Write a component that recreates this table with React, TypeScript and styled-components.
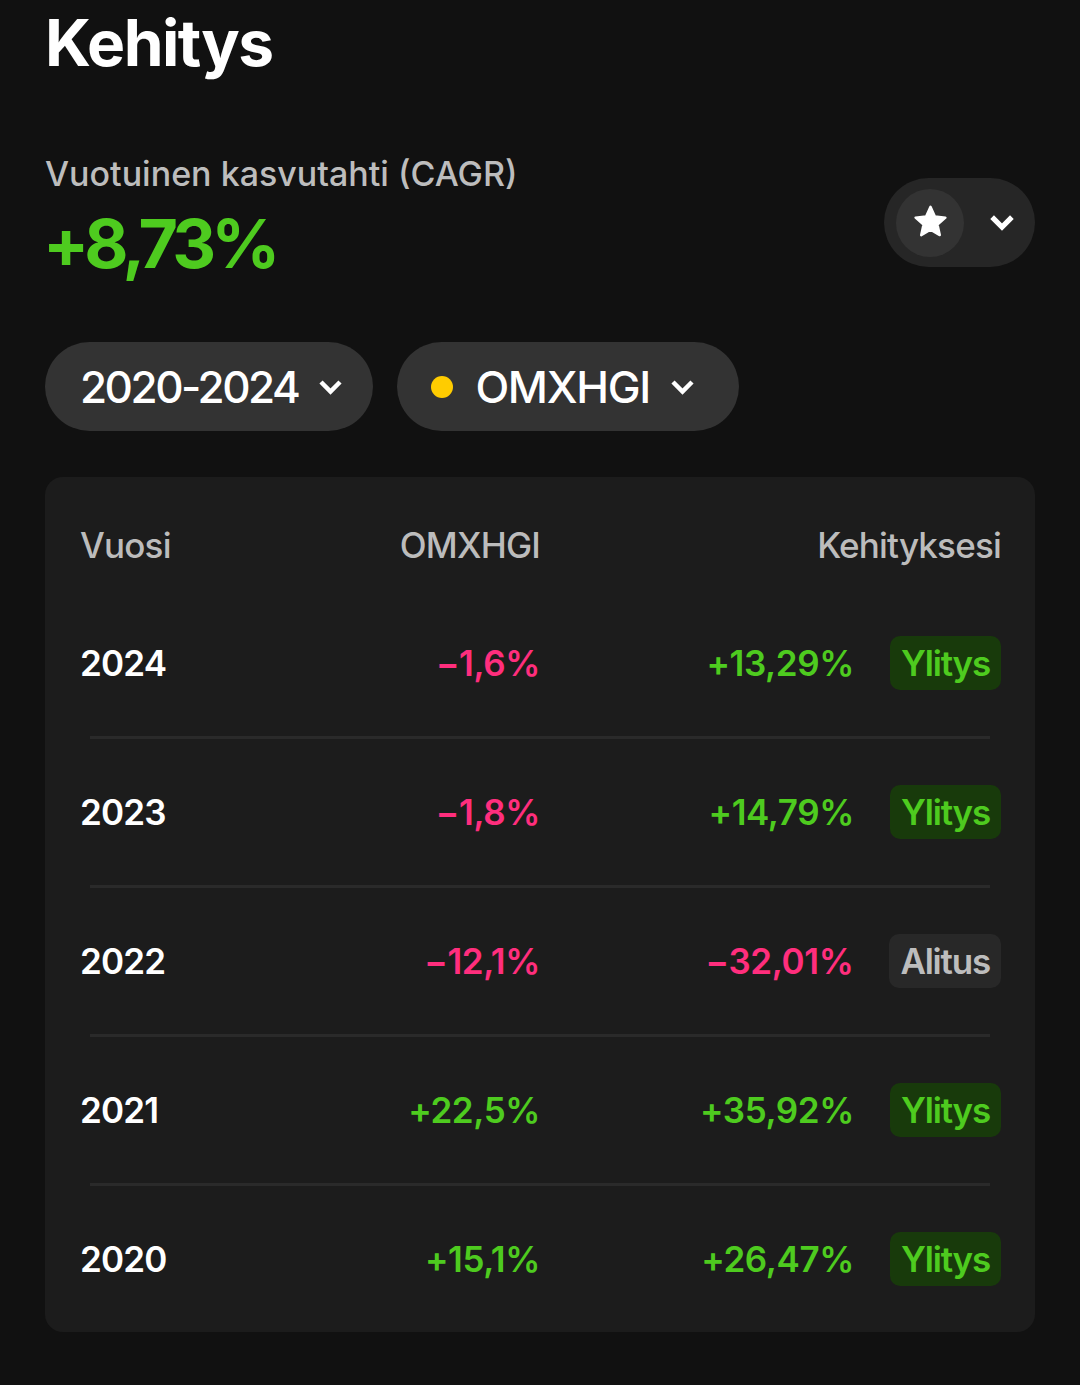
import React from "react";
import styled, { createGlobalStyle } from "styled-components";

const GlobalStyle = createGlobalStyle`
  html, body {
    margin: 0;
    padding: 0;
    background: #111111;
  }
  body {
    font-family: Inter, "Noto Sans", "Liberation Sans", sans-serif;
    color: #ffffff;
    -webkit-font-smoothing: antialiased;
  }
`;

const Page = styled.div`
  width: 1080px;
  min-height: 1385px;
  box-sizing: border-box;
  padding: 11px 45px 0 45px;
  background: #111111;
`;

const Title = styled.h1`
  margin: 0;
  font-size: 64px;
  line-height: 64px;
  font-weight: 700;
  letter-spacing: -1.5px;
  color: #ffffff;
`;

const SummaryRow = styled.div`
  display: flex;
  justify-content: space-between;
  align-items: flex-start;
  margin-top: 78px;
`;

const SummaryText = styled.div`
  display: flex;
  flex-direction: column;
`;

const Subtitle = styled.div`
  font-size: 34px;
  line-height: 41px;
  font-weight: 500;
  color: #bdbdbd;
  letter-spacing: 0px;
`;

const BigValue = styled.div`
  margin-top: 15px;
  margin-left: -2px;
  font-size: 68px;
  line-height: 68px;
  font-weight: 700;
  letter-spacing: -4.8px;
  color: #4ecb1f;
`;

const Toggle = styled.div`
  margin-top: 25px;
  width: 151px;
  height: 89px;
  box-sizing: border-box;
  border-radius: 45px;
  background: #262626;
  display: flex;
  align-items: center;
  padding-left: 12px;
`;

const ToggleKnob = styled.div`
  width: 68px;
  height: 68px;
  border-radius: 50%;
  background: #333333;
  display: flex;
  align-items: center;
  justify-content: center;
`;

const ToggleChevron = styled.div`
  display: flex;
  align-items: center;
  justify-content: center;
  margin-left: 25px;
`;

const FilterRow = styled.div`
  display: flex;
  gap: 24px;
  margin-top: 65px;
`;

const Pill = styled.div<{ $padLeft: number; $padRight: number; $tracking: number }>`
  height: 89px;
  box-sizing: border-box;
  border-radius: 45px;
  background: #333333;
  display: flex;
  align-items: center;
  gap: 20px;
  padding: 0 ${(p) => p.$padRight}px 0 ${(p) => p.$padLeft}px;
  font-size: 44px;
  font-weight: 500;
  letter-spacing: ${(p) => p.$tracking}px;
  color: #ffffff;
`;

const Dot = styled.span`
  width: 22px;
  height: 22px;
  border-radius: 50%;
  background: #ffcc00;
  margin-right: 2px;
`;

const Card = styled.div`
  margin-top: 46px;
  width: 990px;
  box-sizing: border-box;
  background: #1c1c1c;
  border-radius: 18px;
  padding: 23px 34px 0 35px;
`;

const GridRow = styled.div<{ $height: number }>`
  display: grid;
  grid-template-columns: 150px 310px 1fr;
  align-items: center;
  height: ${(p) => p.$height}px;
  font-size: 35px;
`;

const HeadCell = styled.div<{ $align: "left" | "right" }>`
  text-align: ${(p) => p.$align};
  color: #bcbcbc;
  font-weight: 500;
  letter-spacing: -0.8px;
`;

const YearCell = styled.div`
  color: #ffffff;
  font-weight: 600;
  letter-spacing: -0.8px;
`;

const ValueCell = styled.div<{ $positive: boolean }>`
  text-align: right;
  font-weight: 600;
  letter-spacing: -0.4px;
  color: ${(p) => (p.$positive ? "#4ecb1f" : "#ff2e7d")};
`;

const PerfCell = styled.div`
  display: flex;
  justify-content: flex-end;
  align-items: center;
  gap: 36px;
`;

const Badge = styled.span<{ $above: boolean }>`
  display: inline-flex;
  align-items: center;
  height: 54px;
  padding: 0 11px;
  border-radius: 10px;
  font-weight: 600;
  letter-spacing: -1.2px;
  background: ${(p) => (p.$above ? "#183a0b" : "#282828")};
  color: ${(p) => (p.$above ? "#4ecb1f" : "#bdbdbd")};
`;

const Divider = styled.div`
  height: 3px;
  margin: 0 11px 0 10px;
  background: #2a2a2a;
`;

const Chevron = ({ size = 25, stroke = 4.5 }: { size?: number; stroke?: number }) => (
  <svg width={size} height={size * 0.8} viewBox="0 0 25 20" fill="none">
    <path
      d="M3 5 L12.5 14.5 L22 5"
      stroke="#ffffff"
      strokeWidth={stroke}
      strokeLinecap="butt"
      strokeLinejoin="miter"
    />
  </svg>
);

const Star = () => (
  <svg width="37" height="35" viewBox="0 0 24 23" fill="#ffffff">
    <path
      d="M12 1.2 L14.9 7.6 L21.8 8.3 L16.6 12.9 L18.1 19.8 L12 16.3 L5.9 19.8 L7.4 12.9 L2.2 8.3 L9.1 7.6 Z"
      stroke="#ffffff"
      strokeWidth="1.6"
      strokeLinejoin="round"
    />
  </svg>
);

type Row = {
  year: string;
  index: string;
  indexPos: boolean;
  own: string;
  ownPos: boolean;
  above: boolean;
};

const rows: Row[] = [
  { year: "2024", index: "\u22121,6%", indexPos: false, own: "+13,29%", ownPos: true, above: true },
  { year: "2023", index: "\u22121,8%", indexPos: false, own: "+14,79%", ownPos: true, above: true },
  { year: "2022", index: "\u221212,1%", indexPos: false, own: "\u221232,01%", ownPos: false, above: false },
  { year: "2021", index: "+22,5%", indexPos: true, own: "+35,92%", ownPos: true, above: true },
  { year: "2020", index: "+15,1%", indexPos: true, own: "+26,47%", ownPos: true, above: true },
];

export default function App() {
  return (
    <>
      <GlobalStyle />
      <Page>
        <Title>Kehitys</Title>
        <SummaryRow>
          <SummaryText>
            <Subtitle>Vuotuinen kasvutahti (CAGR)</Subtitle>
            <BigValue>+8,73%</BigValue>
          </SummaryText>
          <Toggle>
            <ToggleKnob>
              <Star />
            </ToggleKnob>
            <ToggleChevron>
              <Chevron size={26} stroke={5} />
            </ToggleChevron>
          </Toggle>
        </SummaryRow>
        <FilterRow>
          <Pill $padLeft={35} $padRight={30} $tracking={-2.5}>
            2020-2024
            <Chevron />
          </Pill>
          <Pill $padLeft={34} $padRight={44} $tracking={-1.3}>
            <Dot />
            OMXHGI
            <Chevron />
          </Pill>
        </FilterRow>
        <Card>
          <GridRow $height={90}>
            <HeadCell $align="left">Vuosi</HeadCell>
            <HeadCell $align="right">OMXHGI</HeadCell>
            <HeadCell $align="right">Kehityksesi</HeadCell>
          </GridRow>
          {rows.map((r, i) => (
            <React.Fragment key={r.year}>
              {i > 0 && <Divider />}
              <GridRow $height={146}>
                <YearCell>{r.year}</YearCell>
                <ValueCell $positive={r.indexPos}>{r.index}</ValueCell>
                <PerfCell>
                  <ValueCell $positive={r.ownPos}>{r.own}</ValueCell>
                  <Badge $above={r.above}>{r.above ? "Ylitys" : "Alitus"}</Badge>
                </PerfCell>
              </GridRow>
            </React.Fragment>
          ))}
        </Card>
      </Page>
    </>
  );
}
